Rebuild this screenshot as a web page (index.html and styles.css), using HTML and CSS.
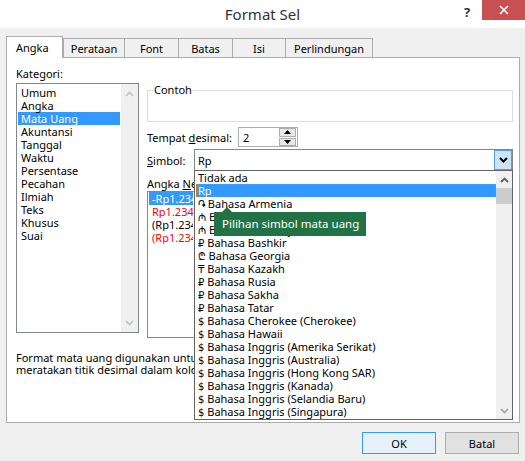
FILE: index.html
```html
<!DOCTYPE html>
<html lang="id">
<head>
<meta charset="utf-8">
<title>Format Sel</title>
<link rel="stylesheet" href="styles.css">
</head>
<body>
<div class="dialog">
  <div class="titlebar">
    <div class="title">Format Sel</div>
    <div class="help">?</div>
    <div class="close">
      <svg width="10" height="10" viewBox="0 0 10 10"><path d="M1 1L9 9M9 1L1 9" stroke="#fff" stroke-width="1.6"/></svg>
    </div>
  </div>

  <div class="tabs">
    <div class="tab active">Angka</div>
    <div class="tab t-perataan">Perataan</div>
    <div class="tab t-font">Font</div>
    <div class="tab t-batas">Batas</div>
    <div class="tab t-isi">Isi</div>
    <div class="tab t-perl">Perlindungan</div>
  </div>

  <div class="panel">
    <div class="cols">
      <div class="left">
        <div class="label">Kate<u>g</u>ori:</div>
        <div class="listbox">
          <div class="items">
            <div class="item">Umum</div>
            <div class="item">Angka</div>
            <div class="item sel">Mata Uang</div>
            <div class="item">Akuntansi</div>
            <div class="item">Tanggal</div>
            <div class="item">Waktu</div>
            <div class="item">Persentase</div>
            <div class="item">Pecahan</div>
            <div class="item">Ilmiah</div>
            <div class="item">Teks</div>
            <div class="item">Khusus</div>
            <div class="item">Suai</div>
          </div>
          <div class="vscroll">
            <svg width="9" height="6" viewBox="0 0 9 6"><path d="M1 5L4.5 1.5L8 5" fill="none" stroke="#c2c2c2" stroke-width="1.6"/></svg>
            <svg width="9" height="6" viewBox="0 0 9 6"><path d="M1 1L4.5 4.5L8 1" fill="none" stroke="#c2c2c2" stroke-width="1.6"/></svg>
          </div>
        </div>
      </div>

      <div class="right">
        <fieldset class="sample"><legend>Contoh</legend></fieldset>

        <div class="row r-dec">
          <div class="rlabel w-dec">Tempat <u>d</u>esimal:</div>
          <div class="spinner">
            <span class="spin-val">2</span>
            <div class="spin-btns">
              <div class="spin-btn"><svg width="7" height="4" viewBox="0 0 7 4"><path d="M0 4L3.5 0L7 4Z" fill="#000"/></svg></div>
              <div class="spin-btn"><svg width="7" height="4" viewBox="0 0 7 4"><path d="M0 0L3.5 4L7 0Z" fill="#000"/></svg></div>
            </div>
          </div>
        </div>

        <div class="row r-sym">
          <div class="rlabel w-sym"><u>S</u>imbol:</div>
          <div class="combo">
            <span class="combo-val">Rp</span>
            <div class="combo-btn"><svg width="9" height="6" viewBox="0 0 9 6"><path d="M1 1L4.5 4.5L8 1" fill="none" stroke="#000" stroke-width="2"/></svg></div>
          </div>
        </div>

        <div class="label neg-label">Angka <u>N</u>egatif:</div>
        <div class="neglist">
          <div class="nitem nsel">-Rp1.234,10</div>
          <div class="nitem red">Rp1.234,10</div>
          <div class="nitem">(Rp1.234,10)</div>
          <div class="nitem red">(Rp1.234,10)</div>
        </div>
      </div>
    </div>

    <div class="desc">Format mata uang digunakan untuk nilai moneter umum. Gunakan format Akuntansi untuk<br>meratakan titik desimal dalam kolom.</div>
  </div>

  <div class="buttons">
    <div class="btn ok">OK</div>
    <div class="btn">Batal</div>
  </div>

  <div class="dropdown">
    <div class="dd-items">
      <div class="ditem">Tidak ada</div>
      <div class="ditem dsel">Rp</div>
      <div class="ditem"><span class="sym">֏</span> Bahasa Armenia</div>
      <div class="ditem"><span class="sym">₼</span> Bahasa Azerbaijan (Latin)</div>
      <div class="ditem"><span class="sym">₼</span> Bahasa Azerbaijan (Sirilik)</div>
      <div class="ditem"><span class="sym">₽</span> Bahasa Bashkir</div>
      <div class="ditem"><span class="sym">₾</span> Bahasa Georgia</div>
      <div class="ditem"><span class="sym">₸</span> Bahasa Kazakh</div>
      <div class="ditem"><span class="sym">₽</span> Bahasa Rusia</div>
      <div class="ditem"><span class="sym">₽</span> Bahasa Sakha</div>
      <div class="ditem"><span class="sym">₽</span> Bahasa Tatar</div>
      <div class="ditem"><span class="sym">$</span> Bahasa Cherokee (Cherokee)</div>
      <div class="ditem"><span class="sym">$</span> Bahasa Hawaii</div>
      <div class="ditem"><span class="sym">$</span> Bahasa Inggris (Amerika Serikat)</div>
      <div class="ditem"><span class="sym">$</span> Bahasa Inggris (Australia)</div>
      <div class="ditem"><span class="sym">$</span> Bahasa Inggris (Hong Kong SAR)</div>
      <div class="ditem"><span class="sym">$</span> Bahasa Inggris (Kanada)</div>
      <div class="ditem"><span class="sym">$</span> Bahasa Inggris (Selandia Baru)</div>
      <div class="ditem"><span class="sym">$</span> Bahasa Inggris (Singapura)</div>
    </div>
    <div class="dd-scroll">
      <div class="dd-arrow"><svg width="9" height="6" viewBox="0 0 9 6"><path d="M1 5L4.5 1.5L8 5" fill="none" stroke="#606060" stroke-width="1.8"/></svg></div>
      <div class="dd-thumb"></div>
      <div class="dd-space"></div>
      <div class="dd-arrow"><svg width="9" height="6" viewBox="0 0 9 6"><path d="M1 1L4.5 4.5L8 1" fill="none" stroke="#a0a0a0" stroke-width="1.6"/></svg></div>
    </div>
  </div>

  <div class="tooltip">Pilihan simbol mata uang</div>
</div>
</body>
</html>
```

FILE: styles.css
```css
* { box-sizing: border-box; }
html, body { margin: 0; padding: 0; }
body {
  width: 525px;
  height: 461px;
  background: #f0f0f0;
  font-family: "Noto Sans", "DejaVu Sans", sans-serif;
  font-size: 11px;
  color: #000;
  overflow: hidden;
}
u { text-decoration: underline; text-underline-offset: 1px; }

.dialog {
  position: relative;
  width: 525px;
  height: 461px;
  display: flex;
  flex-direction: column;
}

.titlebar {
  height: 28px;
  background: #fff;
  display: flex;
  align-items: flex-start;
  position: relative;
}
.title {
  flex: 1;
  text-align: center;
  font-size: 15px;
  line-height: 28px;
  color: #333;
}
.help {
  position: absolute;
  left: 464px;
  top: 3px;
  font-size: 13px;
  font-weight: bold;
  color: #333;
}
.close {
  position: absolute;
  right: 0;
  top: 0;
  width: 43px;
  height: 20px;
  background: #c75050;
  display: flex;
  align-items: center;
  justify-content: center;
}

.tabs {
  display: flex;
  padding-left: 6px;
  margin-top: 8px;
  height: 21px;
  align-items: flex-end;
  position: relative;
  z-index: 2;
}
.tab {
  height: 19px;
  border: 1px solid #acacac;
  border-bottom: none;
  margin-left: -1px;
  display: flex;
  align-items: center;
  justify-content: center;
  background: #f0f0f0;
  line-height: 1;
  padding-top: 1px;
}
.tab.active {
  height: 22px;
  margin-left: 0;
  margin-bottom: -1px;
  width: 57px;
  background: #fff;
  padding-top: 0;
  justify-content: flex-start;
  padding-left: 9px;
}
.t-perataan { width: 62px; margin-left: 0; }
.t-font { width: 55px; }
.t-batas { width: 55px; }
.t-isi { width: 54px; }
.t-perl { width: 88px; }

.panel {
  margin-left: 6px;
  width: 514px;
  height: 366px;
  background: #fff;
  border: 1px solid #acacac;
  padding: 8px 0 0 9px;
  overflow: hidden;
}
.cols {
  display: flex;
  gap: 8px;
  align-items: flex-start;
}
.left { width: 123px; }
.label { line-height: 15px; height: 15px; white-space: nowrap; }

.listbox {
  margin-top: 2px;
  height: 250px;
  border: 1px solid #828790;
  display: flex;
}
.items { flex: 1; padding: 2px 1px; }
.item {
  height: 13px;
  line-height: 13px;
  padding-left: 3px;
  white-space: nowrap;
}
.item.sel { background: #3399ff; color: #fff; }
.vscroll {
  width: 17px;
  background: #f0f0f0;
  display: flex;
  flex-direction: column;
  justify-content: space-between;
  align-items: center;
  padding: 7px 0 6px;
}

.right {
  width: 366px;
  padding-top: 17px;
}
.sample {
  margin: 0;
  padding: 0;
  height: 39px;
  border: 1px solid #dcdcdc;
}
.sample legend {
  padding: 0 1px;
  margin-left: 5px;
  line-height: 14px;
}

.row { display: flex; align-items: center; }
.r-dec { margin-top: 5px; height: 20px; }
.r-sym { margin-top: 2px; height: 22px; }
.rlabel { white-space: nowrap; }
.w-dec { width: 91px; }
.w-sym { width: 47px; }

.spinner {
  width: 60px;
  height: 20px;
  border: 1px solid #abadb3;
  display: flex;
  align-items: center;
  justify-content: space-between;
  padding: 0 1px 0 4px;
}
.spin-btns {
  width: 17px;
  height: 18px;
  display: flex;
  flex-direction: column;
  gap: 1px;
  background: #fff;
}
.spin-btn {
  flex: 1;
  background: #e8e8e8;
  border: 1px solid #adadad;
  display: flex;
  align-items: center;
  justify-content: center;
}

.combo {
  width: 319px;
  height: 22px;
  border: 1px solid #828790;
  display: flex;
  align-items: center;
  justify-content: space-between;
  padding-left: 3px;
  background: #fff;
}
.combo-btn {
  width: 18px;
  height: 20px;
  background: #cce4f7;
  border: 1px solid #569de5;
  display: flex;
  align-items: center;
  justify-content: center;
}

.neg-label { margin-top: 5px; }
.neglist {
  height: 147px;
  border: 1px solid #828790;
  padding: 0 1px;
}
.nitem {
  height: 13px;
  line-height: 13px;
  padding-left: 3px;
  white-space: nowrap;
  width: 44px;
  overflow: hidden;
}
.nsel { background: #3399ff; color: #fff; }
.red { color: #ff0000; }

.desc {
  margin-top: 14px;
  line-height: 12px;
  white-space: nowrap;
  width: 178px;
  overflow: hidden;
}

.buttons {
  display: flex;
  justify-content: flex-end;
  gap: 9px;
  padding: 9px 6px 0 0;
}
.btn {
  width: 74px;
  height: 22px;
  background: #e1e1e1;
  border: 1px solid #adadad;
  display: flex;
  align-items: center;
  justify-content: center;
}
.btn.ok { border-color: #3399ff; background: #e5f1fb; }

.dropdown {
  position: absolute;
  left: 194px;
  top: 170px;
  width: 319px;
  height: 250px;
  background: #fff;
  border: 1px solid #646464;
  display: flex;
  z-index: 5;
}
.dd-items { flex: 1; padding-left: 1px; }
.ditem {
  height: 13px;
  line-height: 13px;
  padding-left: 2px;
  white-space: nowrap;
}
.dsel {
  background: #3399ff;
  color: #fff;
  outline: 1px dotted #e07a10;
  outline-offset: -1px;
}
.sym { font-family: "DejaVu Sans", "Noto Sans", sans-serif; font-size: 10px; }
.dd-scroll {
  width: 16px;
  background: #f0f0f0;
  display: flex;
  flex-direction: column;
  align-items: center;
}
.dd-arrow {
  height: 17px;
  width: 16px;
  display: flex;
  align-items: center;
  justify-content: center;
}
.dd-thumb { width: 16px; height: 16px; background: #cdcdcd; }
.dd-space { flex: 1; }

.tooltip {
  position: absolute;
  left: 214px;
  top: 212px;
  width: 152px;
  height: 24px;
  background: #217346;
  color: #fff;
  font-size: 11.5px;
  line-height: 24px;
  padding-left: 8px;
  white-space: nowrap;
  z-index: 6;
}
.tooltip::before {
  content: "";
  position: absolute;
  left: 8px;
  top: -5px;
  border-left: 5px solid transparent;
  border-right: 5px solid transparent;
  border-bottom: 5px solid #217346;
}
```
